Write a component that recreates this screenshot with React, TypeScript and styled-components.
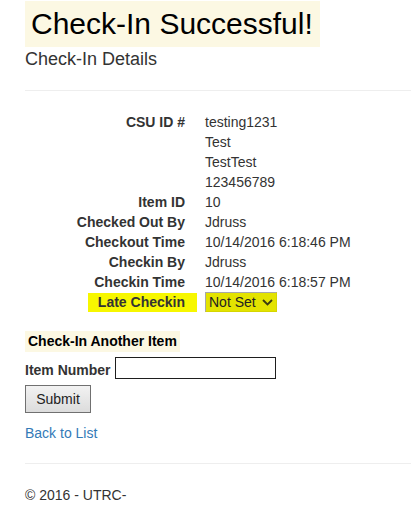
import React from "react";
import styled, { createGlobalStyle } from "styled-components";

const GlobalStyle = createGlobalStyle`
  html, body { margin: 0; padding: 0; background: #fff; }
  body {
    font-family: "Liberation Sans", Arial, Helvetica, sans-serif;
    font-size: 14px;
    line-height: 20px;
    color: #333;
  }
  * { box-sizing: border-box; }
`;

const Page = styled.div`
  padding: 1px 0 0 25px;
  display: flex;
  flex-direction: column;
  align-items: flex-start;
`;

const Title = styled.h1`
  margin: 0;
  display: inline-block;
  background: #fcf8e3;
  color: #000;
  font-size: 30px;
  line-height: 34px;
  font-weight: normal;
  padding: 6px 7px 6px 6px;
`;

const SubTitle = styled.h4`
  margin: 2px 0 0;
  font-size: 18px;
  line-height: 20px;
  font-weight: normal;
  color: #333;
`;

const Rule = styled.hr<{ $top: number; $bottom: number }>`
  align-self: stretch;
  border: 0;
  height: 1px;
  background: #eee;
  margin: ${(p) => p.$top}px 0 ${(p) => p.$bottom}px;
`;

const DetailList = styled.dl`
  margin: 0;
  display: grid;
  grid-template-columns: 160px auto;
  column-gap: 20px;
`;

const Term = styled.dt`
  grid-column: 1;
  text-align: right;
  font-weight: bold;
  white-space: nowrap;
`;

const Desc = styled.dd`
  grid-column: 2;
  margin: 0;
  white-space: nowrap;
`;

const Marked = styled.span`
  display: inline-block;
  background: #f7f700;
  padding: 0 12px 0 10px;
  margin-right: -12px;
  line-height: 19px;
  margin-top: -1px;
`;

const SelectBox = styled.div`
  display: inline-flex;
  align-items: center;
  gap: 6px;
  width: 72px;
  height: 20px;
  padding: 0 0 0 3px;
  background: #e3e300;
  border: 1px solid #a8a8a8;
  border-right-color: #d6d600;
  border-bottom-color: #d6d600;
  color: #222;
  line-height: 18px;
  margin-top: -1px;
`;

const SectionHeading = styled.h5`
  margin: 19px 0 0;
  display: inline-block;
  background: #fcf8e3;
  color: #000;
  font-size: 14px;
  font-weight: bold;
  line-height: 21px;
  padding: 0 3px;
`;

const FormRow = styled.div`
  margin-top: 5px;
  display: flex;
  align-items: flex-end;
  gap: 4px;
`;

const FieldLabel = styled.label`
  font-weight: bold;
  line-height: 20px;
  margin-bottom: -1px;
`;

const TextInput = styled.input`
  width: 161px;
  height: 22px;
  border: 1px solid #1e1e1e;
  padding: 0 2px;
  font: inherit;
  outline: none;
`;

const SubmitButton = styled.button`
  margin-top: 6px;
  width: 66px;
  height: 28px;
  border: 1px solid #707070;
  background: linear-gradient(#f2f2f2, #dcdcdc);
  color: #222;
  font-family: inherit;
  font-size: 14px;
  padding: 0;
`;

const BackLink = styled.a`
  margin-top: 10px;
  color: #337ab7;
  text-decoration: none;
`;

const Footer = styled.footer`
  margin: 0;
`;

function Chevron() {
  return (
    <svg width="11" height="7" viewBox="0 0 11 7">
      <path d="M1 1 L5.5 5.5 L10 1" fill="none" stroke="#3a3a10" strokeWidth="1.8" />
    </svg>
  );
}

const details: [string, string[]][] = [
  ["CSU ID #", ["testing1231", "Test", "TestTest", "123456789"]],
  ["Item ID", ["10"]],
  ["Checked Out By", ["Jdruss"]],
  ["Checkout Time", ["10/14/2016 6:18:46 PM"]],
  ["Checkin By", ["Jdruss"]],
  ["Checkin Time", ["10/14/2016 6:18:57 PM"]],
];

export default function App() {
  return (
    <>
      <GlobalStyle />
      <Page>
        <Title>Check-In Successful!</Title>
        <SubTitle>Check-In Details</SubTitle>
        <Rule $top={21} $bottom={21} />
        <DetailList>
          {details.map(([term, values]) => (
            <React.Fragment key={term}>
              <Term style={{ gridRow: `span ${values.length}` }}>{term}</Term>
              {values.map((v) => (
                <Desc key={v}>{v}</Desc>
              ))}
            </React.Fragment>
          ))}
          <Term>
            <Marked>Late Checkin</Marked>
          </Term>
          <Desc>
            <SelectBox>
              Not Set <Chevron />
            </SelectBox>
          </Desc>
        </DetailList>
        <SectionHeading>Check-In Another Item</SectionHeading>
        <FormRow>
          <FieldLabel htmlFor="itemNumber">Item Number</FieldLabel>
          <TextInput id="itemNumber" type="text" />
        </FormRow>
        <SubmitButton type="button">Submit</SubmitButton>
        <BackLink href="#">Back to List</BackLink>
        <Rule $top={20} $bottom={21} />
        <Footer>© 2016 - UTRC-</Footer>
      </Page>
    </>
  );
}
